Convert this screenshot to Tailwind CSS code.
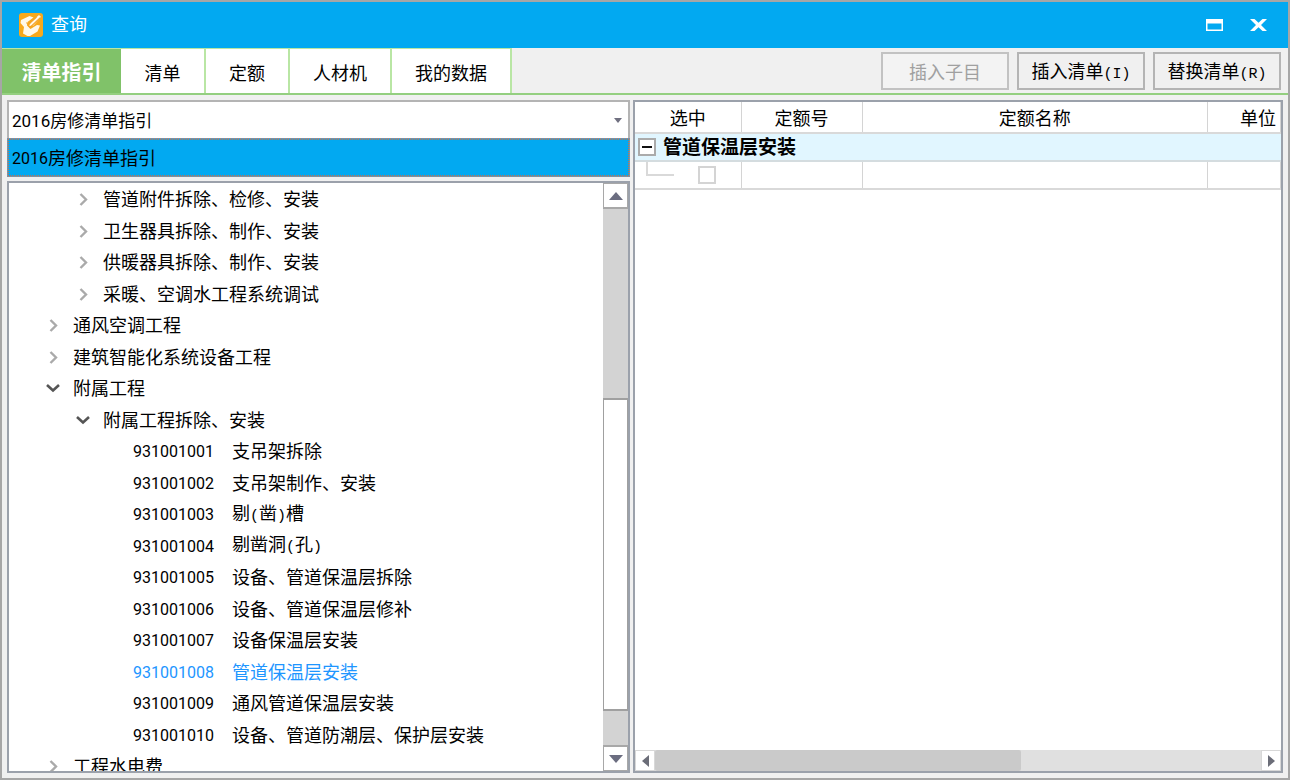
<!DOCTYPE html>
<html lang="zh-CN">
<head>
<meta charset="utf-8">
<title>查询</title>
<script src="https://cdn.jsdelivr.net/npm/@tailwindcss/browser@4"></script>
</head>
<body class="h-screen overflow-hidden bg-[#f0f0f0] font-[Roboto,'Noto_Sans_CJK_SC',sans-serif] text-[18px] leading-6 text-black">
<svg class="hidden" aria-hidden="true">
  <symbol id="right" viewBox="0 0 16 16"><path d="M5.5 2 11 7.500l-5.500 5.500" fill="none" stroke="#aaa" stroke-width="2.4"/></symbol>
  <symbol id="down" viewBox="0 0 16 16"><path d="M2 4l6 5.500L14 4" fill="none" stroke="#555" stroke-width="2.6"/></symbol>
</svg>
<div class="flex h-full flex-col border-2 border-[#a6a6a6]">
  <header class="flex h-[46px] shrink-0 items-center bg-[#02a9f1] pr-5 pl-[17px] text-white">
    <svg class="mr-2 size-6" viewBox="0 0 24 24" aria-hidden="true">
      <rect width="24" height="24" rx="3" fill="#f8a91c"/>
      <path d="M2 7 10.500 3l4 1.500L8.500 9l-.5 3.500 3.500 3.500 6.500-4 3 .5-2.500 6L11 23H8.500L4 20.500 5 14 1.500 10z" fill="#fff8ea"/>
      <path d="m10 13 2-4 8-7 2 2-7.500 8.500z" fill="#fff8ea"/>
      <path d="m7.500 9.500 3.500 5L21.500 4.500M10.500 10.500l7-6.500" fill="none" stroke="#f3a32a" stroke-width="1.100"/>
    </svg>
    <h1 class="flex-1">查询</h1>
    <button class="mr-6 flex h-6 w-5 items-center justify-center" aria-label="最大化">
      <svg class="h-3 w-[17px]" viewBox="0 0 17 12"><path d="M0 0h17v12H0z M1.500 4.500v6h14v-6z" fill="#fff" fill-rule="evenodd"/></svg>
    </button>
    <button class="flex h-6 w-5 items-center justify-center" aria-label="关闭">
      <svg class="h-3 w-[17px]" viewBox="0 0 17 12"><path d="M0 0h4.500l4 3.800L12.500 0H17l-6 6 6 6h-4.500l-4-3.800L4.500 12H0l6-6z" fill="#fff"/></svg>
    </button>
  </header>

  <div class="flex h-[47px] shrink-0 border-b-2 border-[#94cf80]">
    <nav class="flex border-t border-[#b9e6a4] bg-white">
      <button class="w-[119px] bg-[#80c269] pt-1 text-[20px] font-bold text-white">清单指引</button>
      <button class="w-[85px] border-r-2 border-[#b9e6a4] pt-1.5">清单</button>
      <button class="w-[84px] border-r-2 border-[#b9e6a4] pt-1.5">定额</button>
      <button class="w-[102px] border-r-2 border-[#b9e6a4] pt-1.5">人材机</button>
      <button class="w-[120px] border-r-2 border-[#b9e6a4] pt-1.5">我的数据</button>
    </nav>
    <div class="flex flex-1 items-center justify-end gap-2 pr-[7px]">
      <button disabled class="h-[38px] w-32 border-2 border-[#c2c2c2] bg-[#f3f3f3] pt-1 text-[#a0a0a0]">插入子目</button>
      <button class="h-[38px] w-32 border-2 border-[#b4b4b4] pt-1.5">插入清单<span class="font-['Liberation_Mono',monospace] text-[15px]">(I)</span></button>
      <button class="h-[38px] w-32 border-2 border-[#b4b4b4] pt-1.5">替换清单<span class="font-['Liberation_Mono',monospace] text-[15px]">(R)</span></button>
    </div>
  </div>

  <main class="flex min-h-0 flex-1 gap-[3px] px-[5px] pt-[5px] pb-[5px]">
    <section class="flex min-w-0 flex-[623] flex-col">
      <div class="relative h-[38px] shrink-0">
        <select aria-label="清单指引库" class="h-full w-full appearance-none border-2 border-b-0 border-[#b4b4b4] bg-white pt-0.5 pl-[3px] text-[17px]">
          <option>2016房修清单指引</option>
        </select>
        <svg class="pointer-events-none absolute top-[18px] right-2 h-[5px] w-2" viewBox="0 0 8 5" aria-hidden="true"><path d="M0 0h8L4 5z" fill="#707080"/></svg>
      </div>
      <ul role="listbox" aria-label="清单指引库选项" class="shrink-0 border border-[#8090a0]">
        <li role="option" aria-selected="true" class="flex h-[37px] items-center border border-dotted border-[#c8704c] bg-[#02a9f1] pt-0.5 pl-[3px]"><span class="text-[16px]">2016</span>房修清单指引</li>
      </ul>
      <div class="mt-1 flex min-h-0 flex-1 border-2 border-[#9ba1ab] bg-white">
        <ul role="tree" aria-label="清单目录" class="min-w-0 flex-1 overflow-hidden whitespace-nowrap pt-px *:flex *:items-center *:odd:h-8 *:even:h-[31px]">
          <li role="treeitem" class="gap-3 pl-[66px]"><svg class="size-4"><use href="#right"/></svg>管道附件拆除、检修、安装</li>
          <li role="treeitem" class="gap-3 pl-[66px]"><svg class="size-4"><use href="#right"/></svg>卫生器具拆除、制作、安装</li>
          <li role="treeitem" class="gap-3 pl-[66px]"><svg class="size-4"><use href="#right"/></svg>供暖器具拆除、制作、安装</li>
          <li role="treeitem" class="gap-3 pl-[66px]"><svg class="size-4"><use href="#right"/></svg>采暖、空调水工程系统调试</li>
          <li role="treeitem" class="gap-3 pl-9"><svg class="size-4"><use href="#right"/></svg>通风空调工程</li>
          <li role="treeitem" class="gap-3 pl-9"><svg class="size-4"><use href="#right"/></svg>建筑智能化系统设备工程</li>
          <li role="treeitem" class="gap-3 pl-9"><svg class="size-4"><use href="#down"/></svg>附属工程</li>
          <li role="treeitem" class="gap-3 pl-[66px]"><svg class="size-4"><use href="#down"/></svg>附属工程拆除、安装</li>
          <li role="treeitem" class="pl-[124px]"><span class="w-[99px] text-[16px]">931001001</span>支吊架拆除</li>
          <li role="treeitem" class="pl-[124px]"><span class="w-[99px] text-[16px]">931001002</span>支吊架制作、安装</li>
          <li role="treeitem" class="pl-[124px]"><span class="w-[99px] text-[16px]">931001003</span><span>剔<span class="font-['Liberation_Mono',monospace] text-[15px]">(</span>凿<span class="font-['Liberation_Mono',monospace] text-[15px]">)</span>槽</span></li>
          <li role="treeitem" class="pl-[124px]"><span class="w-[99px] text-[16px]">931001004</span><span>剔凿洞<span class="font-['Liberation_Mono',monospace] text-[15px]">(</span>孔<span class="font-['Liberation_Mono',monospace] text-[15px]">)</span></span></li>
          <li role="treeitem" class="pl-[124px]"><span class="w-[99px] text-[16px]">931001005</span>设备、管道保温层拆除</li>
          <li role="treeitem" class="pl-[124px]"><span class="w-[99px] text-[16px]">931001006</span>设备、管道保温层修补</li>
          <li role="treeitem" class="pl-[124px]"><span class="w-[99px] text-[16px]">931001007</span>设备保温层安装</li>
          <li role="treeitem" aria-selected="true" class="pl-[124px] text-[#1e96ff]"><span class="w-[99px] text-[16px]">931001008</span>管道保温层安装</li>
          <li role="treeitem" class="pl-[124px]"><span class="w-[99px] text-[16px]">931001009</span>通风管道保温层安装</li>
          <li role="treeitem" class="pl-[124px]"><span class="w-[99px] text-[16px]">931001010</span>设备、管道防潮层、保护层安装</li>
          <li role="treeitem" class="gap-3 pl-9"><svg class="size-4"><use href="#right"/></svg>工程水电费</li>
        </ul>
        <div class="flex w-[25px] shrink-0 flex-col bg-[#d3d3d3]">
          <button aria-label="向上滚动" class="flex h-[26px] items-center justify-center border border-b-2 border-[#a8a8a8] bg-white"><svg class="h-2 w-3.5" viewBox="0 0 14 8"><path d="M0 8h14L7 0z" fill="#6b6d80"/></svg></button>
          <div class="flex-[191]"></div>
          <div class="flex-[312] border-x border-y-2 border-[#a0a0a0] bg-white"></div>
          <div class="flex-[34]"></div>
          <button aria-label="向下滚动" class="flex h-[26px] items-center justify-center border border-t-2 border-[#a8a8a8] bg-white"><svg class="h-2 w-3.5" viewBox="0 0 14 8"><path d="M0 0h14L7 8z" fill="#6b6d80"/></svg></button>
        </div>
      </div>
    </section>

    <section class="flex min-w-0 flex-[646] flex-col border-2 border-[#9ba1ab] bg-white">
      <table class="w-full table-fixed border-collapse">
        <colgroup><col class="w-[106px]"><col class="w-[121px]"><col><col class="w-[73px]"></colgroup>
        <thead>
          <tr class="h-[31px] border-b-2 border-[#d9d9d9] *:border-r *:border-[#d4d4d4] *:p-0 *:pt-1 *:font-normal">
            <th>选中</th><th>定额号</th><th>定额名称</th><th class="pr-1! text-right">单位</th>
          </tr>
        </thead>
        <tbody>
          <tr class="h-[28px] border-b-2 border-[#d4dcdf] bg-[#e1f6ff]">
            <td colspan="4" class="p-0">
              <div class="flex items-center pl-[3px] text-[19px] font-bold">
                <button aria-label="折叠" class="mr-[7px] flex size-[18px] items-center justify-center border-2 border-[#ababab] bg-white"><svg class="h-0.5 w-2.5"><rect width="10" height="2" fill="#111"/></svg></button><span class="pt-0.5">管道保温层安装</span>
              </div>
            </td>
          </tr>
          <tr class="h-7 border-b-2 border-[#d9d9d9] *:border-r *:border-[#d4d4d4] *:p-0">
            <td>
              <div class="flex h-[26px] items-center pl-[11px]">
                <span class="mb-auto h-3.5 w-7 border-b-2 border-l-2 border-[#d9d9d9]"></span>
                <input type="checkbox" aria-label="选中" class="ml-6 size-[18px] appearance-none border-2 border-[#d4d4d4] bg-white">
              </div>
            </td>
            <td></td><td></td><td></td>
          </tr>
        </tbody>
      </table>
      <div class="mt-auto flex h-[21px] bg-[#e0e0e0]">
        <button aria-label="向左滚动" class="flex w-5 items-center justify-center border border-[#d8d8d8] bg-white"><svg class="h-3 w-[7px]" viewBox="0 0 7 12"><path d="M7 0v12L0 6z" fill="#6b6d78"/></svg></button>
        <div class="flex-[366] rounded-xs bg-[#cacaca]"></div>
        <div class="flex-[240]"></div>
        <button aria-label="向右滚动" class="flex w-5 items-center justify-center border border-[#d8d8d8] bg-white"><svg class="h-3 w-[7px]" viewBox="0 0 7 12"><path d="M0 0v12l7-6z" fill="#6b6d78"/></svg></button>
      </div>
    </section>
  </main>
</div>
</body>
</html>
